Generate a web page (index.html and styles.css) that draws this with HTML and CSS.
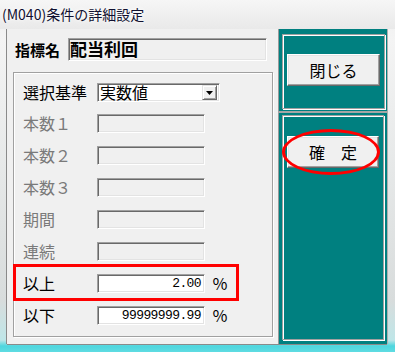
FILE: index.html
```html
<!DOCTYPE html>
<html lang="ja">
<head>
    <meta charset="UTF-8">
    <meta name="viewport" content="width=device-width, initial-scale=1.0">
    <title>(M040)条件の詳細設定</title>
    <link rel="stylesheet" href="styles.css">
</head>
<body>
    <div class="window">
        <div class="titlebar"><span class="title">(M040)条件の詳細設定</span></div>
        <div class="client">
            <div class="main">
                <div class="name-row">
                    <span class="name-label">指標名</span>
                    <div class="name-field">配当利回</div>
                </div>
                <div class="group">
                    <div class="row row-select">
                        <span class="label">選択基準</span>
                        <div class="select">
                            <span class="select-text">実数値</span>
                            <span class="drop-btn">
                                <svg width="7" height="4" viewBox="0 0 7 4"><path d="M0 0H7L3.5 4Z" fill="#000"/></svg>
                            </span>
                        </div>
                    </div>
                    <div class="row disabled"><span class="label">本数１</span><div class="field"></div></div>
                    <div class="row disabled"><span class="label">本数２</span><div class="field"></div></div>
                    <div class="row disabled"><span class="label">本数３</span><div class="field"></div></div>
                    <div class="row disabled"><span class="label">期間</span><div class="field"></div></div>
                    <div class="row disabled"><span class="label">連続</span><div class="field"></div></div>
                    <div class="row"><span class="label">以上</span><div class="field value">2.00</div><span class="unit">％</span></div>
                    <div class="row"><span class="label">以下</span><div class="field value">99999999.99</div><span class="unit">％</span></div>
                </div>
                <div class="mark-rect"></div>
            </div>
            <div class="side">
                <div class="panel panel-top">
                    <div class="etched etched-top">
                        <button type="button" class="btn">閉じる</button>
                    </div>
                </div>
                <div class="panel panel-bottom">
                    <div class="etched etched-bottom">
                        <button type="button" class="btn">確　定</button>
                    </div>
                    <div class="mark-oval"></div>
                </div>
            </div>
        </div>
    </div>
</body>
</html>
```

FILE: styles.css
```css
body {
    margin: 0;
    padding: 0;
    background: #fff;
    font-family: 'Noto Sans CJK JP', 'Noto Sans', sans-serif;
    color: #000;
}
.window {
    width: 395px;
    height: 352px;
    box-sizing: border-box;
    background: linear-gradient(to bottom, #eeeeee 0, #f4f4f4 40px, #d8dcdc 300px, #bfe6e8 340px, #4ed6de 346px, #5fdce2 352px);
    overflow: hidden;
}
.titlebar {
    height: 29px;
    padding-left: 2px;
    background: linear-gradient(to bottom, #f6f6f6, #e9e9e9);
}
.title {
    font-size: 14px;
    line-height: 28px;
    color: #101030;
    text-shadow: 0 0 6px #fff, 0 0 3px #fff;
}
.client {
    display: flex;
    margin-left: 7px;
    width: 380px;
    height: 315px;
    box-shadow: -1px 0 0 #8a8a8a, 0 1px 0 #8a8a8a, 1px 0 0 #b0b0b0;
}
.main {
    position: relative;
    width: 271px;
    background: #f0f0f0;
}
.name-row {
    display: flex;
    align-items: center;
    padding: 9px 0 0 8px;
}
.name-label {
    width: 53px;
    font-size: 15px;
    font-weight: bold;
    line-height: 23px;
}
.name-field {
    width: 199px;
    height: 23px;
    box-sizing: border-box;
    padding-left: 1px;
    font-size: 17px;
    font-weight: bold;
    line-height: 19px;
    border: 1px solid;
    border-color: #a0a0a0 #fff #fff #a0a0a0;
    box-shadow: inset 1px 1px 0 #696969, inset -1px -1px 0 #e3e3e3;
}
.group {
    margin: 11px 0 0 6px;
    width: 260px;
    height: 265px;
    box-sizing: border-box;
    padding: 10px 0 0 9px;
    border: 1px solid #a0a0a0;
    box-shadow: inset 1px 1px 0 #fff, 1px 1px 0 #fff;
}
.row {
    display: flex;
    align-items: center;
    height: 19px;
    margin-bottom: 13px;
}
.row-select {
    margin-bottom: 12px;
}
.label {
    width: 74px;
    font-size: 16px;
    line-height: 19px;
}
.disabled .label {
    color: #7a7a7a;
}
.field {
    width: 108px;
    height: 19px;
    box-sizing: border-box;
    border: 1px solid;
    border-color: #a0a0a0 #fff #fff #a0a0a0;
    box-shadow: inset 1px 1px 0 #696969, inset -1px -1px 0 #e3e3e3;
}
.value {
    background: #fff;
    padding-right: 3px;
    text-align: right;
    font-family: 'Liberation Mono', 'DejaVu Sans Mono', monospace;
    font-size: 13px;
    letter-spacing: -0.6px;
    line-height: 17px;
}
.unit {
    margin-left: 7px;
    font-size: 16px;
    line-height: 19px;
}
.select {
    display: flex;
    align-items: center;
    justify-content: space-between;
    width: 123px;
    height: 19px;
    box-sizing: border-box;
    background: #fff;
    border: 1px solid;
    border-color: #a0a0a0 #fff #fff #a0a0a0;
    box-shadow: inset 1px 1px 0 #696969, inset -1px -1px 0 #e3e3e3;
    padding: 0 2px 0 2px;
}
.select-text {
    font-size: 16px;
    line-height: 17px;
}
.drop-btn {
    display: flex;
    align-items: center;
    justify-content: center;
    width: 15px;
    height: 15px;
    box-sizing: border-box;
    background: #f0f0f0;
    border: 1px solid;
    border-color: #e3e3e3 #696969 #696969 #e3e3e3;
    box-shadow: inset 1px 1px 0 #fff, inset -1px -1px 0 #a0a0a0;
}
.mark-rect {
    position: absolute;
    left: 6px;
    top: 235px;
    width: 226px;
    height: 37px;
    box-sizing: border-box;
    border: 3px solid #f00;
}
.side {
    display: flex;
    flex-direction: column;
    width: 109px;
}
.panel {
    position: relative;
    background: #008080;
    border-left: 1px solid #9a9a9a;
    box-sizing: border-box;
}
.panel-top {
    height: 84px;
    padding: 5px 2px 2px 3px;
    border-bottom: 2px solid #a6a6a6;
}
.panel-bottom {
    flex: 1;
    padding: 2px 3px 4px 3px;
}
.etched {
    height: 100%;
    box-sizing: border-box;
    border: 1px solid #a0a0a0;
    box-shadow: inset 1px 1px 0 #fff, 1px 1px 0 #fff;
}
.etched-top {
    padding: 19px 0 0 4px;
}
.etched-bottom {
    padding: 20px 0 0 4px;
}
.btn {
    display: block;
    width: 93px;
    height: 32px;
    padding: 0;
    background: #f0f0f0;
    font-family: 'Noto Sans CJK JP', 'Noto Sans', sans-serif;
    font-size: 16px;
    color: #000;
    border: 1px solid;
    border-color: #fff #696969 #696969 #fff;
    box-shadow: inset -1px -1px 0 #a0a0a0, inset 1px 1px 0 #e3e3e3;
}
.etched-bottom .btn {
    width: 92px;
}
.mark-oval {
    position: absolute;
    left: 3px;
    top: 16px;
    width: 98px;
    height: 46px;
    box-sizing: border-box;
    border: 3px solid #f00;
    border-radius: 50%;
}
```
